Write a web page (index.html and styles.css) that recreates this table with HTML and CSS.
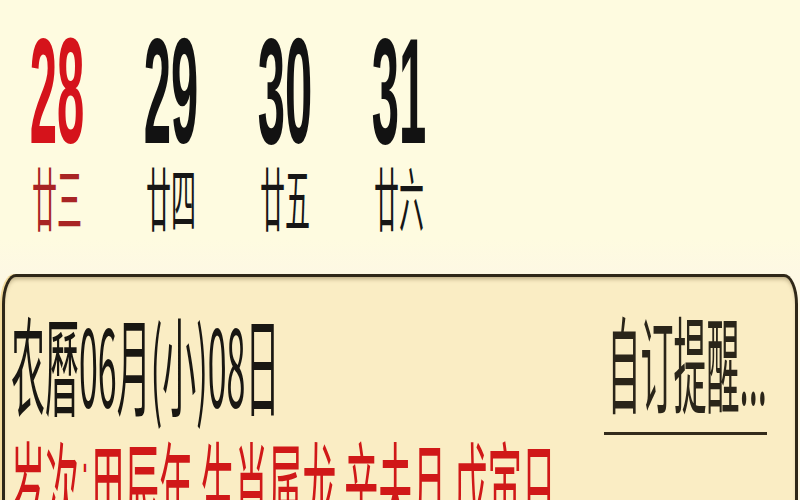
FILE: index.html
```html
<!DOCTYPE html>
<html lang="zh-CN">
<head>
<meta charset="utf-8">
<title>农历日历</title>
<link rel="stylesheet" href="styles.css">
</head>
<body>
<div class="page">
  <div class="week">
    <div class="day sun">
      <div class="num"><span>28</span></div>
      <div class="lunar"><span>廿三</span></div>
    </div>
    <div class="day">
      <div class="num"><span>29</span></div>
      <div class="lunar"><span>廿四</span></div>
    </div>
    <div class="day">
      <div class="num"><span>30</span></div>
      <div class="lunar"><span>廿五</span></div>
    </div>
    <div class="day">
      <div class="num"><span>31</span></div>
      <div class="lunar"><span>廿六</span></div>
    </div>
    <div class="day empty"></div>
    <div class="day empty"></div>
    <div class="day empty"></div>
  </div>
  <div class="panel">
    <div class="panel-head">
      <div class="lunar-date"><span>农曆06月(小)08日</span></div>
      <div class="remind"><span>自订提醒...</span></div>
    </div>
    <div class="ganzhi"><span>岁次<i class="dot">·</i>甲辰年 生肖属龙 辛未月 戊寅日</span></div>
  </div>
</div>
</body>
</html>
```

FILE: styles.css
```css
html, body {
  margin: 0;
  padding: 0;
}
body {
  width: 800px;
  height: 500px;
  overflow: hidden;
  background: #fefbe1;
  font-family: "Noto Sans CJK SC", "Noto Sans", sans-serif;
}
.page {
  width: 800px;
  height: 500px;
  overflow: hidden;
  background: linear-gradient(#fefbe0 0, #fefbe0 240px, #fdf8e4 275px);
}
.week {
  display: grid;
  grid-template-columns: repeat(7, 114px);
  padding-top: 18px;
  height: 215px;
}
.day {
  text-align: center;
}
.num {
  height: 145px;
}
.num span {
  display: inline-block;
  font-family: "Liberation Sans", Arial, sans-serif;
  font-weight: bold;
  font-size: 49px;
  line-height: 1;
  color: #121212;
  transform: scaleY(3.06);
  transform-origin: top center;
}
.lunar {
  height: 69px;
}
.lunar span {
  display: inline-block;
  font-size: 25px;
  line-height: 1;
  color: #161616;
  transform: scaleY(2.76);
  transform-origin: top center;
}
.sun .num span {
  color: #d5131b;
}
.sun .lunar span {
  color: #a82424;
}
.panel {
  margin: 41px 2px 0 2px;
  height: 260px;
  background: #faedc4;
  border: 3px solid #2e2718;
  border-bottom: none;
  border-radius: 14px 14px 0 0 / 30px 30px 0 0;
  box-shadow: inset 0 4px 4px -2px rgba(70, 50, 10, 0.35), -2px 0 0 #f3dc9f;
  padding: 33px 28px 0 6px;
}
.panel-head {
  display: flex;
  justify-content: space-between;
  align-items: flex-start;
  height: 126px;
}
.lunar-date {
  height: 108px;
}
.lunar-date span {
  display: inline-block;
  font-size: 34px;
  line-height: 1;
  color: #191712;
  transform: scaleY(3.16);
  transform-origin: top left;
}
.remind {
  height: 122px;
  border-bottom: 3px solid #332b1b;
  padding-left: 3px;
}
.remind span {
  display: inline-block;
  font-size: 33px;
  line-height: 1;
  color: #2a2519;
  transform: scaleY(3.16);
  transform-origin: top left;
}
.ganzhi {
  margin-top: -1px;
  white-space: nowrap;
}
.ganzhi span {
  display: inline-block;
  font-size: 34px;
  line-height: 1;
  color: #d01818;
  transform: scaleY(3.16);
  transform-origin: top left;
}
.ganzhi .dot {
  display: inline-block;
  vertical-align: top;
  position: relative;
  top: -3px;
  font-style: normal;
  font-family: "Liberation Sans", Arial, sans-serif;
  font-size: 24px;
  line-height: 24px;
  margin: 0 2px;
}
```
